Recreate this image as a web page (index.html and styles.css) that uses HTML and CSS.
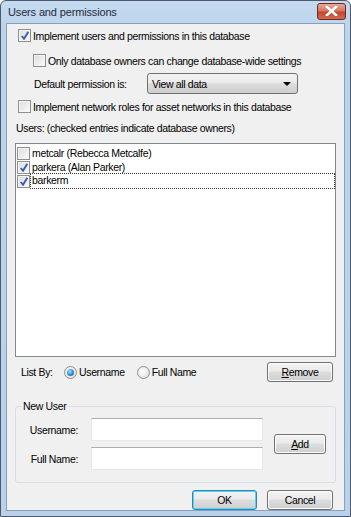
FILE: index.html
```html
<!DOCTYPE html>
<html lang="en">
<head>
  <meta charset="UTF-8" />
  <title>Users and permissions</title>
  <link rel="stylesheet" href="styles.css">
</head>
<body>
  <div class="window">
    <div class="titlebar">
      <span class="title">Users and permissions</span>
      <span class="close">
        <svg width="13" height="10" viewBox="0 0 13 10"><path d="M2 1 L11 9 M11 1 L2 9" stroke="#fff" stroke-width="2.6" stroke-linecap="square"/></svg>
      </span>
    </div>

    <div class="content">
      <label class="check row-impl"><span class="box checked"></span>Implement users and permissions in this database</label>
      <label class="check row-owners"><span class="box"></span>Only database owners can change database-wide settings</label>

      <div class="row-default">
        <span class="default-label">Default permission is:</span>
        <div class="combo">
          <span>View all data</span>
          <span class="combo-arrow"></span>
        </div>
      </div>

      <label class="check row-network"><span class="box"></span>Implement network roles for asset networks in this database</label>

      <div class="users-label">Users: (checked entries indicate database owners)</div>

      <div class="listbox">
        <div class="item"><span class="box small"></span><span class="item-text">metcalr (Rebecca Metcalfe)</span></div>
        <div class="item"><span class="box small checked"></span><span class="item-text">parkera (Alan Parker)</span></div>
        <div class="item"><span class="box small checked"></span><span class="item-text focus">barkerm</span></div>
      </div>

      <div class="listby-row">
        <span class="listby-label">List By:</span>
        <label class="radio"><span class="dot on"></span>Username</label>
        <label class="radio"><span class="dot"></span>Full Name</label>
        <button class="btn remove"><u>R</u>emove</button>
      </div>

      <fieldset class="group">
        <legend>New User</legend>
        <div class="group-body">
          <div class="fields">
            <div class="field"><span class="field-label">Username:</span><span class="input"></span></div>
            <div class="field"><span class="field-label">Full Name:</span><span class="input"></span></div>
          </div>
          <button class="btn add"><u>A</u>dd</button>
        </div>
      </fieldset>

      <div class="footer">
        <button class="btn default">OK</button>
        <button class="btn">Cancel</button>
      </div>
    </div>
  </div>
</body>
</html>
```

FILE: styles.css
```css
* { box-sizing: border-box; margin: 0; padding: 0; }
body {
  background: #fff;
  font-family: "Liberation Sans", Arial, sans-serif;
  font-size: 10.5px;
  letter-spacing: -0.35px;
  color: #000;
}
.window {
  width: 351px;
  height: 517px;
  border: 1px solid #4d5a68;
  border-radius: 6px 6px 0 0;
  background: linear-gradient(#c5daf0, #bcd3ec 30px, #b9d1ea);
  padding: 0 5px 5px;
  display: flex;
  flex-direction: column;
}
.titlebar {
  height: 22px;
  display: flex;
  align-items: center;
  justify-content: space-between;
  padding-left: 2px;
}
.title {
  font-size: 11px;
  letter-spacing: -0.15px;
  color: #1e2a38;
  margin-top: -1px;
}
.close {
  width: 29px;
  height: 17px;
  margin-top: -2px;
  margin-right: -1px;
  border: 1px solid #6b2a22;
  border-radius: 3px;
  background: linear-gradient(#e9a99b, #d47662 45%, #c4472f 55%, #d26a4f);
  display: flex;
  align-items: center;
  justify-content: center;
}
.content {
  flex: 1;
  background: #f0f0f0;
  border: 1px solid #8aa0b8;
  padding: 5px 0 0 11px;
  display: flex;
  flex-direction: column;
}

/* checkboxes */
.check {
  display: flex;
  align-items: center;
  height: 13px;
}
.box {
  width: 13px;
  height: 13px;
  border: 1px solid #8e8f8f;
  background: linear-gradient(135deg, #dcdcdc, #fbfbfb);
  box-shadow: inset 0 0 0 1px #f4f4f4;
  margin-right: 2px;
  flex: none;
  position: relative;
}
.box.checked::after {
  content: "";
  position: absolute;
  left: 2px;
  top: 1px;
  width: 8px;
  height: 9px;
  background: no-repeat center / contain url("data:image/svg+xml,%3Csvg xmlns='http://www.w3.org/2000/svg' viewBox='0 0 8 9'%3E%3Cpath d='M0.8 5 L3 7.8 L7.3 0.8' fill='none' stroke='%233561b0' stroke-width='1.9'/%3E%3C/svg%3E");
}
.row-owners { margin-top: 12px; margin-left: 15px; }
.row-default {
  display: flex;
  align-items: center;
  margin-top: 6px;
  margin-left: 16px;
  height: 21px;
}
.default-label { width: 113px; }
.combo {
  width: 151px;
  height: 21px;
  border: 1px solid #707070;
  border-radius: 3px;
  background: linear-gradient(#f2f2f2, #ebebeb 45%, #dddddd 50%, #cfcfcf);
  display: flex;
  align-items: center;
  justify-content: space-between;
  padding: 0 6px 0 4px;
}
.combo-arrow {
  width: 0;
  height: 0;
  border-left: 4px solid transparent;
  border-right: 4px solid transparent;
  border-top: 4px solid #000;
}
.row-network { margin-top: 6px; }
.users-label { margin-top: 9px; margin-left: -2px; height: 13px; line-height: 13px; }

/* list */
.listbox {
  margin-top: 8px;
  margin-left: -3px;
  width: 321px;
  height: 214px;
  flex: none;
  border: 1px solid #828790;
  background: #fff;
  padding: 2px 1px;
}
.item {
  display: flex;
  align-items: center;
  height: 14px;
}
.box.small { margin-right: 1px; }
.item-text { padding: 0 1px; line-height: 13px; }
.item-text.focus {
  flex: 1;
  outline: 1px dotted #333;
  outline-offset: 0;
  height: 14px;
}

.listby-row {
  display: flex;
  align-items: center;
  margin-top: 5px;
  height: 20px;
  flex: none;
  padding-left: 3px;
}
.listby-label { width: 37px; }
.radio { display: flex; align-items: center; margin-left: 6px; }
.radio + .radio { margin-left: 12px; }
.dot {
  width: 13px;
  height: 13px;
  border-radius: 50%;
  border: 1px solid #8e8f8f;
  background: radial-gradient(circle at 40% 40%, #fff, #d8d8d8);
  margin-right: 2px;
  position: relative;
}
.dot.on::after {
  content: "";
  position: absolute;
  left: 2px;
  top: 2px;
  width: 7px;
  height: 7px;
  border-radius: 50%;
  background: radial-gradient(circle at 40% 35%, #9fe0ff, #2f8ad8 55%, #0a5197);
}

.btn {
  font: inherit;
  letter-spacing: inherit;
  width: 66px;
  height: 20px;
  border: 1px solid #707070;
  border-radius: 3px;
  background: linear-gradient(#f2f2f2, #ebebeb 45%, #dddddd 50%, #cfcfcf);
  box-shadow: inset 0 0 0 1px #fcfcfc;
  color: #000;
}
.btn u { text-decoration: underline; }
.remove { margin-left: auto; margin-right: 11px; }

/* group */
.group {
  margin-top: 18px;
  margin-left: -3px;
  width: 321px;
  height: 83px;
  flex: none;
  border: 1px solid #d5dfe5;
  border-radius: 3px;
  padding: 0 9px 0 0;
}
.group legend {
  margin-left: 6px;
  padding: 0 1px;
  line-height: 13px;
}
.group-body {
  display: flex;
  align-items: center;
  margin-top: 5px;
}
.fields { display: flex; flex-direction: column; gap: 6px; }
.field { display: flex; align-items: center; }
.field-label { width: 64px; text-align: right; padding-right: 2px; }
.input {
  margin-left: 11px;
  width: 172px;
  height: 23px;
  border: 1px solid #e3e9ef;
  border-top-color: #abadb3;
  background: #fff;
}
.add { width: 52px; margin-left: auto; }

.footer {
  display: flex;
  justify-content: flex-end;
  gap: 10px;
  margin-top: 7px;
  padding-right: 11px;
}
.btn.default {
  width: 65px;
  border-color: #3c7fb1;
  box-shadow: inset 0 0 0 1px #48d8fb;
}
```
